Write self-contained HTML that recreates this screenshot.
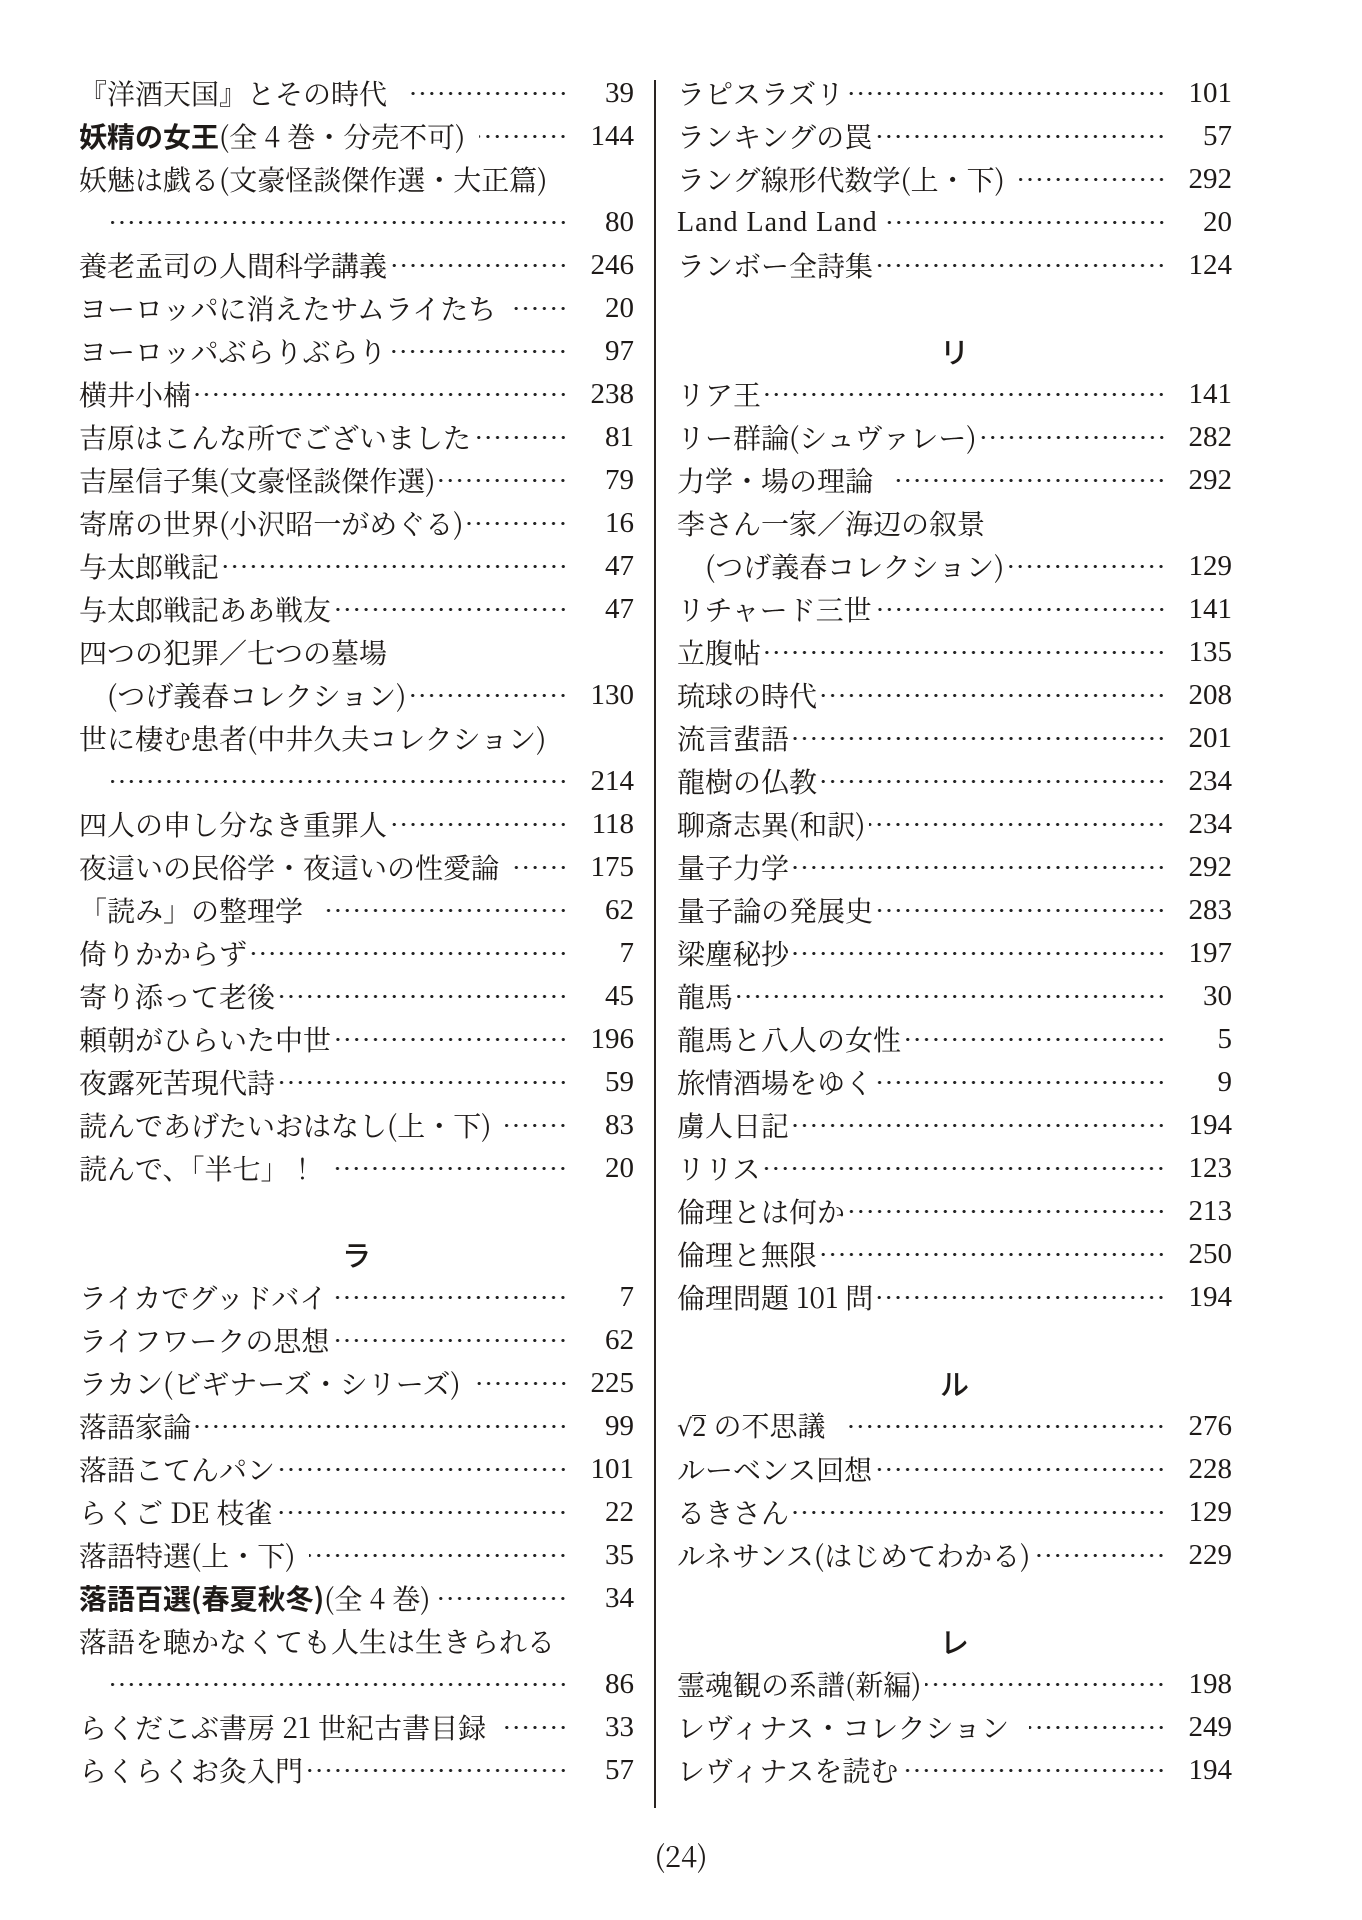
<!DOCTYPE html>
<html><head><meta charset="utf-8">
<style>
html,body{margin:0;padding:0;background:#fff;}
body{width:1362px;height:1920px;position:relative;overflow:hidden;color:#1e1a18;
font-family:"Noto Serif CJK JP","Noto Serif CJK SC","Liberation Serif",serif;}
.col{position:absolute;top:72px;}
#L{left:79px;width:555px;}
#R{left:677px;width:555px;}
.r{height:43px;line-height:43px;display:flex;align-items:center;font-size:28px;white-space:nowrap;}
.t{flex:none;}
.d{flex:1;height:43px;margin-left:4px;margin-right:10px;
background:radial-gradient(circle,#222 1.4px,transparent 1.8px) repeat-x;
background-size:9.4px 9.4px;background-position:right center;}
.n{flex:none;width:56px;text-align:right;font-family:"Liberation Serif",serif;font-size:29px;}
.i{padding-left:28px;}
.b{font-family:"Noto Sans CJK JP",sans-serif;font-weight:700;}
.h{justify-content:center;font-family:"Noto Sans CJK JP",sans-serif;font-weight:500;font-size:29px;}
#div{position:absolute;left:654px;top:80px;width:2px;height:1728px;background:#2a2422;}
#pg{position:absolute;left:0;width:1362px;top:1835px;text-align:center;font-size:29px;}
.sq{display:inline-block;border-top:1.5px solid #1e1a18;line-height:24px;font-family:"Liberation Serif",serif;}
</style></head><body>
<div id="div"></div>
<div class="col" id="L">
<div class="r"><span class="t">『洋酒天国』とその時代</span><span class="d" style="margin-left:22px"></span><span class="n">39</span></div>
<div class="r"><span class="t"><span class="b">妖精の女王</span>(全 4 巻・分売不可)</span><span class="d" style="margin-left:14px"></span><span class="n">144</span></div>
<div class="r"><span class="t">妖魅は戯る(文豪怪談傑作選・大正篇)</span></div>
<div class="r i"><span class="d"></span><span class="n">80</span></div>
<div class="r"><span class="t">養老孟司の人間科学講義</span><span class="d"></span><span class="n">246</span></div>
<div class="r"><span class="t">ヨーロッパに消えたサムライたち</span><span class="d" style="margin-left:14px"></span><span class="n">20</span></div>
<div class="r"><span class="t">ヨーロッパぶらりぶらり</span><span class="d"></span><span class="n">97</span></div>
<div class="r"><span class="t">横井小楠</span><span class="d"></span><span class="n">238</span></div>
<div class="r"><span class="t">吉原はこんな所でございました</span><span class="d"></span><span class="n">81</span></div>
<div class="r"><span class="t">吉屋信子集(文豪怪談傑作選)</span><span class="d"></span><span class="n">79</span></div>
<div class="r"><span class="t">寄席の世界(小沢昭一がめぐる)</span><span class="d"></span><span class="n">16</span></div>
<div class="r"><span class="t">与太郎戦記</span><span class="d"></span><span class="n">47</span></div>
<div class="r"><span class="t">与太郎戦記ああ戦友</span><span class="d"></span><span class="n">47</span></div>
<div class="r"><span class="t">四つの犯罪／七つの墓場</span></div>
<div class="r i"><span class="t">(つげ義春コレクション)</span><span class="d"></span><span class="n">130</span></div>
<div class="r"><span class="t">世に棲む患者(中井久夫コレクション)</span></div>
<div class="r i"><span class="d"></span><span class="n">214</span></div>
<div class="r"><span class="t">四人の申し分なき重罪人</span><span class="d"></span><span class="n">118</span></div>
<div class="r"><span class="t">夜這いの民俗学・夜這いの性愛論</span><span class="d" style="margin-left:14px"></span><span class="n">175</span></div>
<div class="r"><span class="t">「読み」の整理学</span><span class="d" style="margin-left:22px"></span><span class="n">62</span></div>
<div class="r"><span class="t">倚りかからず</span><span class="d"></span><span class="n">7</span></div>
<div class="r"><span class="t">寄り添って老後</span><span class="d"></span><span class="n">45</span></div>
<div class="r"><span class="t">頼朝がひらいた中世</span><span class="d"></span><span class="n">196</span></div>
<div class="r"><span class="t">夜露死苦現代詩</span><span class="d"></span><span class="n">59</span></div>
<div class="r"><span class="t">読んであげたいおはなし(上・下)</span><span class="d" style="margin-left:14px"></span><span class="n">83</span></div>
<div class="r"><span class="t">読んで、「半七」！</span><span class="d" style="margin-left:18px"></span><span class="n">20</span></div>
<div class="r"></div>
<div class="r h">ラ</div>
<div class="r"><span class="t">ライカでグッドバイ</span><span class="d"></span><span class="n">7</span></div>
<div class="r"><span class="t">ライフワークの思想</span><span class="d"></span><span class="n">62</span></div>
<div class="r"><span class="t">ラカン(ビギナーズ・シリーズ)</span><span class="d" style="margin-left:14px"></span><span class="n">225</span></div>
<div class="r"><span class="t">落語家論</span><span class="d"></span><span class="n">99</span></div>
<div class="r"><span class="t">落語こてんパン</span><span class="d"></span><span class="n">101</span></div>
<div class="r"><span class="t">らくご DE 枝雀</span><span class="d"></span><span class="n">22</span></div>
<div class="r"><span class="t">落語特選(上・下)</span><span class="d" style="margin-left:14px"></span><span class="n">35</span></div>
<div class="r"><span class="t"><span class="b">落語百選(春夏秋冬)</span>(全 4 巻)</span><span class="d"></span><span class="n">34</span></div>
<div class="r"><span class="t">落語を聴かなくても人生は生きられる</span></div>
<div class="r i"><span class="d"></span><span class="n">86</span></div>
<div class="r"><span class="t">らくだこぶ書房 21 世紀古書目録</span><span class="d" style="margin-left:14px"></span><span class="n">33</span></div>
<div class="r"><span class="t">らくらくお灸入門</span><span class="d"></span><span class="n">57</span></div>
</div>
<div class="col" id="R">
<div class="r"><span class="t">ラピスラズリ</span><span class="d"></span><span class="n">101</span></div>
<div class="r"><span class="t">ランキングの罠</span><span class="d"></span><span class="n">57</span></div>
<div class="r"><span class="t">ラング線形代数学(上・下)</span><span class="d" style="margin-left:14px"></span><span class="n">292</span></div>
<div class="r"><span class="t" style="font-family:'Liberation Serif',serif;letter-spacing:1px">Land Land Land</span><span class="d"></span><span class="n">20</span></div>
<div class="r"><span class="t">ランボー全詩集</span><span class="d"></span><span class="n">124</span></div>
<div class="r"></div>
<div class="r h">リ</div>
<div class="r"><span class="t">リア王</span><span class="d"></span><span class="n">141</span></div>
<div class="r"><span class="t">リー群論(シュヴァレー)</span><span class="d"></span><span class="n">282</span></div>
<div class="r"><span class="t">力学・場の理論</span><span class="d" style="margin-left:20px"></span><span class="n">292</span></div>
<div class="r"><span class="t">李さん一家／海辺の叙景</span></div>
<div class="r i"><span class="t">(つげ義春コレクション)</span><span class="d"></span><span class="n">129</span></div>
<div class="r"><span class="t">リチャード三世</span><span class="d"></span><span class="n">141</span></div>
<div class="r"><span class="t">立腹帖</span><span class="d"></span><span class="n">135</span></div>
<div class="r"><span class="t">琉球の時代</span><span class="d"></span><span class="n">208</span></div>
<div class="r"><span class="t">流言蜚語</span><span class="d"></span><span class="n">201</span></div>
<div class="r"><span class="t">龍樹の仏教</span><span class="d"></span><span class="n">234</span></div>
<div class="r"><span class="t">聊斎志異(和訳)</span><span class="d"></span><span class="n">234</span></div>
<div class="r"><span class="t">量子力学</span><span class="d"></span><span class="n">292</span></div>
<div class="r"><span class="t">量子論の発展史</span><span class="d"></span><span class="n">283</span></div>
<div class="r"><span class="t">梁塵秘抄</span><span class="d"></span><span class="n">197</span></div>
<div class="r"><span class="t">龍馬</span><span class="d"></span><span class="n">30</span></div>
<div class="r"><span class="t">龍馬と八人の女性</span><span class="d"></span><span class="n">5</span></div>
<div class="r"><span class="t">旅情酒場をゆく</span><span class="d"></span><span class="n">9</span></div>
<div class="r"><span class="t">虜人日記</span><span class="d"></span><span class="n">194</span></div>
<div class="r"><span class="t">リリス</span><span class="d"></span><span class="n">123</span></div>
<div class="r"><span class="t">倫理とは何か</span><span class="d"></span><span class="n">213</span></div>
<div class="r"><span class="t">倫理と無限</span><span class="d"></span><span class="n">250</span></div>
<div class="r"><span class="t">倫理問題 101 問</span><span class="d"></span><span class="n">194</span></div>
<div class="r"></div>
<div class="r h">ル</div>
<div class="r"><span class="t"><span style="font-family:'DejaVu Serif',serif;font-size:24px">√</span><span class="sq">2</span> の不思議</span><span class="d" style="margin-left:20px"></span><span class="n">276</span></div>
<div class="r"><span class="t">ルーベンス回想</span><span class="d"></span><span class="n">228</span></div>
<div class="r"><span class="t">るきさん</span><span class="d"></span><span class="n">129</span></div>
<div class="r"><span class="t">ルネサンス(はじめてわかる)</span><span class="d"></span><span class="n">229</span></div>
<div class="r"></div>
<div class="r h">レ</div>
<div class="r"><span class="t">霊魂観の系譜(新編)</span><span class="d"></span><span class="n">198</span></div>
<div class="r"><span class="t">レヴィナス・コレクション</span><span class="d" style="margin-left:20px"></span><span class="n">249</span></div>
<div class="r"><span class="t">レヴィナスを読む</span><span class="d"></span><span class="n">194</span></div>
</div>
<div id="pg">(24)</div>
</body></html>
